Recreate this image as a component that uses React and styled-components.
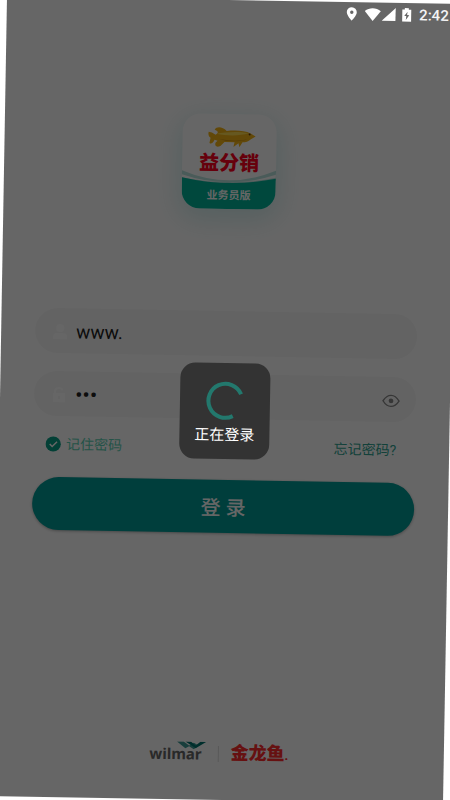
import React, { useState } from "react";
import styled, { createGlobalStyle } from "styled-components";

function App() {
  const [account, setAccount] = useState("www.");
  const [password, setPassword] = useState("123");
  const [visible, setVisible] = useState(false);
  const [remember, setRemember] = useState(true);

  return (
    <>
      <GlobalStyle />
      <Screen>
        <StatusBar>
          <svg width="12" height="16" viewBox="0 0 12 16">
            <path fillRule="evenodd" d="M6 1a5 5 0 0 0-5 5c0 3.600 5 8.500 5 8.500s5-4.900 5-8.500a5 5 0 0 0-5-5zm0 3.400a1.700 1.700 0 1 1 0 3.400 1.700 1.700 0 0 1 0-3.400z" />
          </svg>
          <svg width="18" height="16" viewBox="0 0 18 16">
            <path d="M1 4.500C5.500.8 12.500.8 17 4.500L9 14.500z" />
          </svg>
          <svg width="14" height="16" viewBox="0 0 14 16">
            <path d="M14 1v13H0z" />
          </svg>
          <svg width="10" height="16" viewBox="0 0 10 16">
            <path fillRule="evenodd" d="M3 1h4v1.500h2.500v12h-9v-12H3zM5.800 4.500L2.500 9H4.600l-.5 3.800L7.500 8H5.300z" />
          </svg>
          <span>2:42</span>
        </StatusBar>

        <Main>
          <AppIcon>
            <IconArt viewBox="0 0 94 95">
              <path fill="#b9e4de" d="M0 57Q47 76 94 56V66Q47 74 0 65z" />
              <path fill="#fff" d="M0 61Q47 76 94 60V63Q47 73 0 64z" />
              <path fill="#00b49a" d="M0 64Q47 74 94 64V95H0z" />
              <path
                fill="#f5b516"
                d="M26 18q3 0 7 3c2-1 3-3 1-4l-2-1c2-4 8-3 12 1 8-1 18-1 24 2l5 3-5 3c-2 2-5 3-8 3l-3 5-1-4-5 4 1-5H42l-4 4c-4 2-6 0-5-3l2-2-3-1c-1 3-4 5-5 3l1-5q-3-2-2-6z"
              />
              <path fill="#ffdc50" d="M34 20c9-2 23-3 32-1-9 3-22 3-32 1z" />
              <path fill="#c98a10" d="M36 25c9 2 22 2 29 0-8 3-21 3-29 0z" />
              <circle cx="67" cy="20" r="1" fill="#5f3a08" />
            </IconArt>
            <IconName>益分销</IconName>
            <IconEdition>业务员版</IconEdition>
          </AppIcon>

          <Form onSubmit={(e) => e.preventDefault()}>
            <Field>
              <svg width="14" height="16" viewBox="0 0 14 16">
                <circle cx="7" cy="4" r="4" />
                <path d="M0 15v-2q0-4 4-4h6q4 0 4 4v2z" />
              </svg>
              <Input
                aria-label="账号"
                value={account}
                onChange={(e) => setAccount(e.target.value)}
              />
            </Field>
            <Field>
              <svg width="14" height="16" viewBox="0 0 14 16">
                <path fillRule="evenodd" d="M2 6V4q0-4 5-4 4 0 4 3H9Q9 2 7 2 4 2 4 4v2h9v9H1V6zm4 3v3h2V9z" />
              </svg>
              <Input
                aria-label="密码"
                type={visible ? "text" : "password"}
                value={password}
                onChange={(e) => setPassword(e.target.value)}
              />
              <EyeButton type="button" aria-label="显示密码" onClick={() => setVisible(!visible)}>
                <svg width="18" height="14" viewBox="0 0 18 14">
                  <path fill="none" stroke="currentColor" strokeWidth="1.400" d="M1 7Q4.500 1.500 9 1.500T17 7Q13.500 12.500 9 12.500T1 7z" />
                  <circle cx="9" cy="7" r="2.400" fill="currentColor" />
                </svg>
              </EyeButton>
            </Field>

            <Options>
              <Remember>
                <input
                  type="checkbox"
                  checked={remember}
                  onChange={(e) => setRemember(e.target.checked)}
                />
                <svg width="16" height="16" viewBox="0 0 16 16">
                  <circle cx="8" cy="8" r="7.600" fill="#08a088" />
                  {remember && (
                    <path fill="none" stroke="#fff" strokeWidth="1.500" d="M4.500 8l2.500 2.500L11.800 5.700" />
                  )}
                </svg>
                记住密码
              </Remember>
              <Forgot href="#forgot">忘记密码?</Forgot>
            </Options>

            <LoginButton type="submit">登 录</LoginButton>
          </Form>

          <Brands>
            <Wilmar>
              wilmar
              <WilmarMark width="30" height="8" viewBox="0 0 32 8">
                <path fill="#3f9c97" d="M0 0h7l6 4 5-3 5 3-5 4-5-3-4 2z" />
                <path fill="#00746f" d="M9 0h6l5 4 5-4h6l-11 7z" />
              </WilmarMark>
            </Wilmar>
            <Divider />
            <Arawana>
              金龙鱼<small>.</small>
            </Arawana>
          </Brands>
        </Main>

        <Overlay>
          <Toast role="status">
            <Spinner width="40" height="40" viewBox="0 0 40 40">
              <path d="M36 13A17 17 0 1 0 28 35" />
            </Spinner>
            正在登录
          </Toast>
        </Overlay>
      </Screen>
    </>
  );
}

const GlobalStyle = createGlobalStyle`
  * {
    box-sizing: border-box;
  }
  body {
    margin: 0;
    background: #fff;
    overflow: hidden;
    font-family: Roboto, "Noto Sans CJK SC", sans-serif;
  }
  button, input {
    font-family: inherit;
  }
`;

const Screen = styled.div`
  position: relative;
  display: flex;
  flex-direction: column;
  min-height: 100vh;
  background: #fff;
  transform: rotate(1deg);
`;

const StatusBar = styled.header`
  position: relative;
  z-index: 2;
  display: flex;
  align-items: center;
  justify-content: flex-end;
  height: 24px;
  padding-right: 8px;
  color: #f4f4f4;
  font-size: 15px;
  font-weight: 500;
  svg {
    fill: #fff;
  }
  svg + svg {
    margin-left: 6px;
  }
  svg:nth-child(3) {
    margin-left: 0;
  }
  span {
    margin-left: 7px;
  }
`;

const Main = styled.main`
  flex: 1;
  display: flex;
  flex-direction: column;
  align-items: center;
  padding: 90px 34px 34px;
`;

const AppIcon = styled.div`
  position: relative;
  display: flex;
  flex-direction: column;
  align-items: center;
  width: 94px;
  height: 94px;
  padding-top: 37px;
  border-radius: 18px;
  background: #fff;
  box-shadow: 0 8px 24px 4px rgba(0, 160, 160, 0.16);
`;

const IconArt = styled.svg`
  position: absolute;
  inset: 0;
  border-radius: 18px;
`;

const IconName = styled.strong`
  position: relative;
  color: #ff0020;
  font-size: 20px;
  font-weight: 900;
  line-height: 24px;
`;

const IconEdition = styled.span`
  position: relative;
  margin-top: 13px;
  color: #fff;
  font-size: 11px;
  font-weight: 700;
  line-height: 16px;
`;

const Form = styled.form`
  align-self: stretch;
  display: flex;
  flex-direction: column;
  margin-top: 103px;
`;

const Field = styled.div`
  display: flex;
  align-items: center;
  height: 45px;
  padding: 2px 16px 0 18px;
  border-radius: 23px;
  background: #f8f8f8;
  & + & {
    margin-top: 18px;
  }
  > svg {
    fill: #fff;
  }
`;

const Input = styled.input`
  flex: 1;
  min-width: 0;
  margin-left: 9px;
  padding: 0;
  border: 0;
  outline: 0;
  background: none;
  color: #222;
  font-size: 19px;
  &[type="password"] {
    font-size: 22px;
  }
`;

const EyeButton = styled.button`
  display: flex;
  padding: 0;
  border: 0;
  background: none;
  color: #888;
`;

const Options = styled.div`
  display: flex;
  align-items: center;
  justify-content: space-between;
  margin: 18px 19px 23px 12px;
  font-size: 14px;
  line-height: 20px;
`;

const Remember = styled.label`
  display: flex;
  align-items: center;
  gap: 5px;
  color: #5cd0b4;
  input {
    position: absolute;
    opacity: 0;
  }
`;

const Forgot = styled.a`
  color: #30a492;
  text-decoration: none;
`;

const LoginButton = styled.button`
  height: 53px;
  border: 0;
  border-radius: 27px;
  background: #009b96;
  box-shadow: 0 1px 3px rgba(0, 0, 0, 0.3);
  color: #fff;
  font-size: 20px;
  font-weight: 500;
`;

const Brands = styled.footer`
  display: flex;
  align-items: center;
  margin-top: auto;
`;

const Wilmar = styled.span`
  position: relative;
  color: #666;
  font-family: "Noto Sans", sans-serif;
  font-size: 15px;
  font-weight: 700;
  line-height: 22px;
`;

const WilmarMark = styled.svg`
  position: absolute;
  top: -1px;
  right: -5px;
`;

const Divider = styled.i`
  width: 1px;
  height: 16px;
  margin: 0 12px 0 16px;
  background: #ddd;
`;

const Arawana = styled.span`
  color: #ff2c2c;
  font-size: 18px;
  font-weight: 900;
  line-height: 22px;
  small {
    font-size: 12px;
  }
`;

const Overlay = styled.div`
  position: absolute;
  inset: 0;
  z-index: 1;
  display: flex;
  align-items: center;
  justify-content: center;
  padding-top: 22px;
  background: rgba(0, 0, 0, 0.6);
`;

const Toast = styled.div`
  display: flex;
  flex-direction: column;
  align-items: center;
  width: 90px;
  height: 96px;
  padding-top: 18px;
  border-radius: 15px;
  background: #333;
  color: #fff;
  font-size: 15px;
  line-height: 28px;
`;

const Spinner = styled.svg`
  fill: none;
  stroke: #23786d;
  stroke-width: 4px;
`;

export default App;
